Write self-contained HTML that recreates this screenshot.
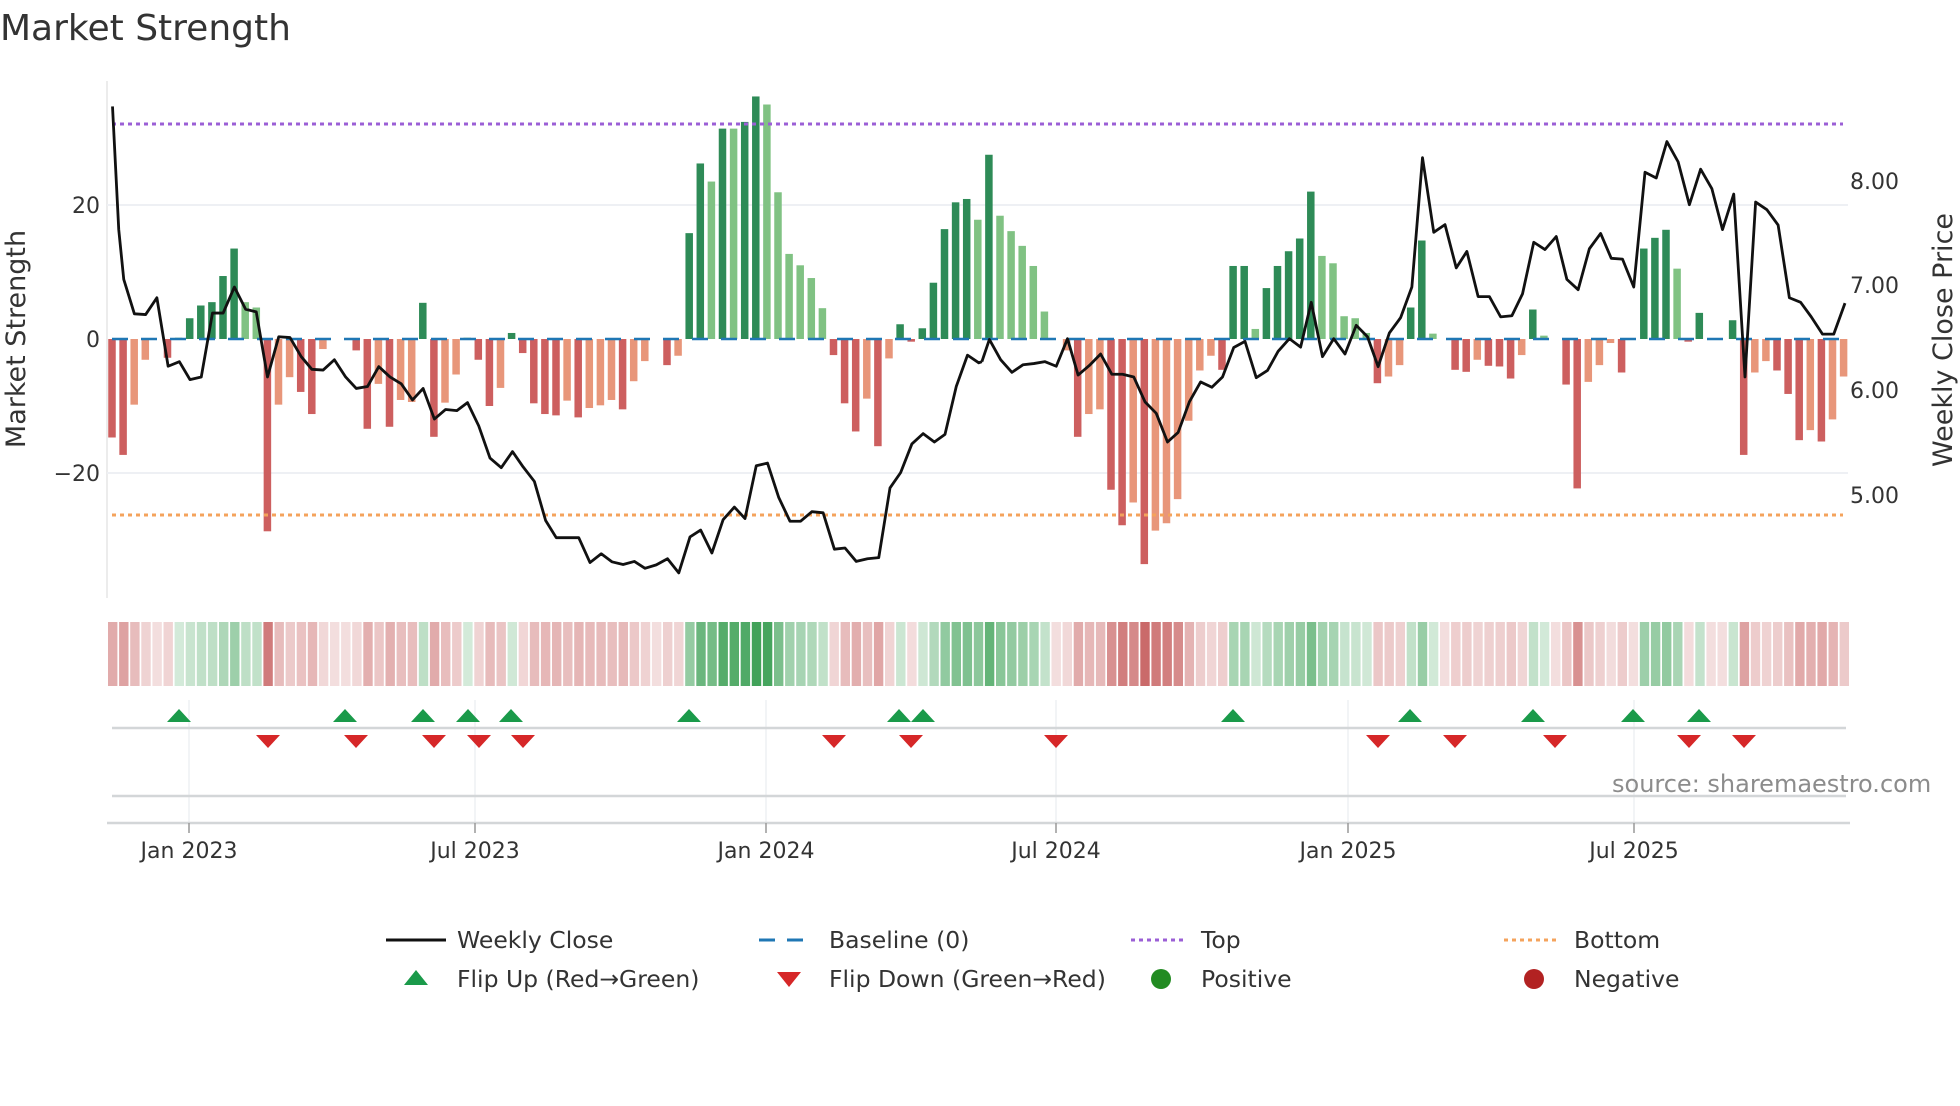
<!DOCTYPE html>
<html><head><meta charset="utf-8">
<style>
html,body{margin:0;padding:0;background:#fff;}
body{width:1960px;height:1102px;overflow:hidden;position:relative;font-family:"DejaVu Sans","Liberation Sans",sans-serif;color:#333;}
svg text{font-family:"DejaVu Sans","Liberation Sans",sans-serif;}
</style></head>
<body>
<svg id="s" width="1960" height="1102" viewBox="0 0 1960 1102" xmlns="http://www.w3.org/2000/svg">
<text x="0" y="40" font-size="36" fill="#333">Market Strength</text>
<line x1="107" y1="81" x2="107" y2="598" stroke="#e6e6e6" stroke-width="1.5"/>
<line x1="107" y1="205" x2="1848" y2="205" stroke="#eef0f4" stroke-width="2"/>
<line x1="107" y1="473" x2="1848" y2="473" stroke="#eef0f4" stroke-width="2"/>
<g id="bars"></g>
<line x1="112" y1="339" x2="1843" y2="339" stroke="#1f77b4" stroke-width="2.5" stroke-dasharray="16 13"/>
<line x1="112" y1="124" x2="1843" y2="124" stroke="#9b5fd6" stroke-width="3" stroke-dasharray="4 4"/>
<line x1="112" y1="515" x2="1843" y2="515" stroke="#f4a35c" stroke-width="3" stroke-dasharray="4 4"/>
<g fill="none" stroke="#111" stroke-width="2.8" stroke-linejoin="round">
<polyline transform="matrix(0.625,0,0,0.3827,0,0)" vector-effect="non-scaling-stroke" points="180,278 190,600 198,730 215,820 233,822 251,778 269,957 287,945 304,992 322,985 340,818 357,818 375,750 393,808 410,815 428,985 446,880 464,882 482,932 499,965 517,967 535,940 553,985 570,1015 588,1010 606,958 624,985 642,1003 660,1045 677,1015 695,1095 713,1070 731,1073 748,1052 766,1113 784,1197 802,1222 820,1180 837,1220 855,1258 873,1360 890,1405 908,1405 926,1405 944,1470 962,1447 979,1468 997,1475 1015,1467 1032,1485 1050,1476 1068,1460 1086,1497 1104,1403 1121,1385 1139,1445 1157,1358 1175,1325 1192,1355 1210,1217 1228,1210 1246,1300 1264,1362 1281,1362 1299,1337 1317,1340 1335,1435 1352,1432 1370,1467 1388,1460 1406,1457 1424,1275 1441,1235 1459,1160 1477,1133 1495,1155 1512,1135 1530,1010 1548,928 1566,948 1571,945"/>
<polyline transform="matrix(0.625,0,0,0.3827,980,0)" vector-effect="non-scaling-stroke" points="3,945 15,887 33,940 51,973 69,953 86,950 104,945 122,957 140,885 157,980 175,955 193,925 211,978 228,978 246,985 264,1050 282,1080 300,1155 317,1130 335,1050 353,998 371,1012 388,985 406,908 424,892 442,987 460,968 477,918 495,885 513,907 530,790 548,932 566,885 584,925 602,850 620,880 637,958 655,870 673,830 691,750 708,412 726,607 744,587 762,700 779,657 797,775 815,775 833,828 851,825 868,768 886,633 904,652 922,618 939,730 957,757 975,650 993,610 1010,675 1028,677 1046,750 1064,450 1082,465 1099,370 1117,423 1135,535 1153,442 1171,493 1188,600 1206,507 1224,985 1241,528 1259,548 1277,588 1295,778 1313,790 1330,828 1348,873 1366,873 1384,792"/>
</g>
<g font-size="22" fill="#333" text-anchor="end">
<text x="100" y="213">20</text>
<text x="100" y="347">0</text>
<text x="100" y="481">−20</text>
</g>
<g font-size="22" fill="#333">
<text x="1850" y="189">8.00</text>
<text x="1850" y="293">7.00</text>
<text x="1850" y="398">6.00</text>
<text x="1850" y="503">5.00</text>
</g>
<text transform="translate(25,339) rotate(-90)" font-size="27" fill="#333" text-anchor="middle">Market Strength</text>
<text transform="translate(1952,340) rotate(-90)" font-size="27" fill="#333" text-anchor="middle">Weekly Close Price</text>
<g id="heat"></g>
<g stroke="#eef0f3" stroke-width="1.5">
<line x1="189" y1="700" x2="189" y2="822"/><line x1="475" y1="700" x2="475" y2="822"/><line x1="766" y1="700" x2="766" y2="822"/><line x1="1056" y1="700" x2="1056" y2="822"/><line x1="1348" y1="700" x2="1348" y2="822"/><line x1="1634" y1="700" x2="1634" y2="822"/>
</g>
<line x1="112" y1="728" x2="1846" y2="728" stroke="#d3d6d8" stroke-width="2.5"/>
<line x1="112" y1="796" x2="1846" y2="796" stroke="#d3d6d8" stroke-width="2.5"/>
<line x1="107" y1="823" x2="1850" y2="823" stroke="#d3d6d8" stroke-width="2.5"/>
<g id="flips"></g>
<text x="1612" y="792" font-size="24" fill="#8c8c8c">source: sharemaestro.com</text>
<g stroke="#999" stroke-width="1.5">
<line x1="189" y1="823" x2="189" y2="833"/><line x1="475" y1="823" x2="475" y2="833"/><line x1="766" y1="823" x2="766" y2="833"/><line x1="1056" y1="823" x2="1056" y2="833"/><line x1="1348" y1="823" x2="1348" y2="833"/><line x1="1634" y1="823" x2="1634" y2="833"/>
</g>
<g font-size="22" fill="#333" text-anchor="middle">
<text x="189" y="858">Jan 2023</text>
<text x="475" y="858">Jul 2023</text>
<text x="766" y="858">Jan 2024</text>
<text x="1056" y="858">Jul 2024</text>
<text x="1348" y="858">Jan 2025</text>
<text x="1634" y="858">Jul 2025</text>
</g>
<g font-size="23.5" fill="#333">
<line x1="386" y1="940" x2="446" y2="940" stroke="#111" stroke-width="3"/>
<text x="457" y="948">Weekly Close</text>
<line x1="759" y1="940" x2="815" y2="940" stroke="#1f77b4" stroke-width="3" stroke-dasharray="16 12"/>
<text x="829" y="948">Baseline (0)</text>
<line x1="1131" y1="940" x2="1187" y2="940" stroke="#9b5fd6" stroke-width="3" stroke-dasharray="4 4"/>
<text x="1201" y="948">Top</text>
<line x1="1504" y1="940" x2="1560" y2="940" stroke="#f4a35c" stroke-width="3" stroke-dasharray="4 4"/>
<text x="1574" y="948">Bottom</text>
<polygon points="404,985 428,985 416,970" fill="#1a9a4a"/>
<text x="457" y="987">Flip Up (Red→Green)</text>
<polygon points="777,972 801,972 789,987" fill="#d62728"/>
<text x="829" y="987">Flip Down (Green→Red)</text>
<circle cx="1161" cy="979" r="10" fill="#228b22"/>
<text x="1201" y="987">Positive</text>
<circle cx="1534" cy="979" r="10" fill="#b22222"/>
<text x="1574" y="987">Negative</text>
</g>
</svg>
<script>
var v=[-14.7,-17.3,-9.8,-3.1,0,-2.8,0.2,3.1,5,5.5,9.4,13.5,5.5,4.7,-28.7,-9.8,-5.7,-7.9,-11.2,-1.5,0,0,-1.7,-13.4,-6.7,-13.1,-9.1,-9.4,5.4,-14.6,-9.5,-5.3,0.2,-3.1,-10,-7.3,0.9,-2.1,-9.6,-11.2,-11.4,-9.2,-11.7,-10.3,-9.9,-9.1,-10.5,-6.3,-3.3,0,-3.9,-2.5,15.8,26.2,23.5,31.4,31.4,32.4,36.2,35,21.9,12.7,11,9.1,4.6,-2.4,-9.6,-13.8,-8.9,-16,-2.9,2.2,-0.4,1.6,8.4,16.4,20.4,20.9,17.8,27.5,18.4,16.1,13.9,10.9,4.1,0,-1.7,-14.6,-11.2,-10.5,-22.5,-27.8,-24.4,-33.6,-28.6,-27.5,-23.9,-12.2,-4.7,-2.5,-4.6,10.9,10.9,1.5,7.6,10.9,13.1,15,22,12.4,11.3,3.4,3.1,0.9,-6.6,-5.6,-3.9,4.7,14.7,0.8,0,-4.6,-4.9,-3.1,-4,-4.1,-5.9,-2.4,4.4,0.5,0,-6.8,-22.3,-6.4,-3.9,-0.6,-5,0,13.5,15.1,16.3,10.5,-0.4,3.9,0,0,2.8,-17.3,-5,-3.3,-4.7,-8.2,-15.1,-13.6,-15.3,-12,-5.6];
var darkG=[7,8,9,10,11,28,36,52,53,55,57,58,71,73,74,75,76,77,79,101,102,104,105,106,107,108,117,118,128,138,139,140,143,146];
var darkR=[0,1,5,14,17,18,22,23,25,29,33,34,37,38,39,40,42,46,50,65,66,67,69,72,87,90,91,93,100,114,121,122,124,125,126,131,132,136,142,147,150,151,152,154];
var NS="http://www.w3.org/2000/svg";
function el(t,a,p){var e=document.createElementNS(NS,t);for(var k in a)e.setAttribute(k,a[k]);document.getElementById(p).appendChild(e);}
for(var i=0;i<v.length;i++){
 var x=112+11.1*i-3.75, h=v[i]*6.7, c;
 if(v[i]>0.1){c=darkG.indexOf(i)>=0?"#2e8b57":"#80c283";}else{c=darkR.indexOf(i)>=0?"#cd5f5f":"#e8967a";}
 if(Math.abs(h)>0.3){el("rect",{x:x,y:h>0?339-h:339,width:7.5,height:Math.abs(h),fill:c},"bars");}
 var a,r,g,b;
 if(v[i]>0.1){a=Math.min(1,0.22+v[i]/36*0.75);r=60;g=160;b=85;}else{a=Math.min(1,0.2+(-v[i])/30*0.62);r=196;g=88;b=88;}
 var R=Math.round(255-a*(255-r)),Gc=Math.round(255-a*(255-g)),B=Math.round(255-a*(255-b));
 el("rect",{x:108+11.1*i,y:622,width:9.4,height:64,fill:"rgb("+R+","+Gc+","+B+")"},"heat");
}
var up=[179,345,423,468,511,689,899,923,1233,1410,1533,1633,1699];
var dn=[268,356,434,479,523,834,911,1056,1378,1455,1555,1689,1744];
up.forEach(function(x){el("polygon",{points:(x-12)+",722 "+(x+12)+",722 "+x+",709",fill:"#1a9a4a"},"flips");});
dn.forEach(function(x){el("polygon",{points:(x-12)+",735 "+(x+12)+",735 "+x+",748",fill:"#d62728"},"flips");});
</script>
</body></html>
